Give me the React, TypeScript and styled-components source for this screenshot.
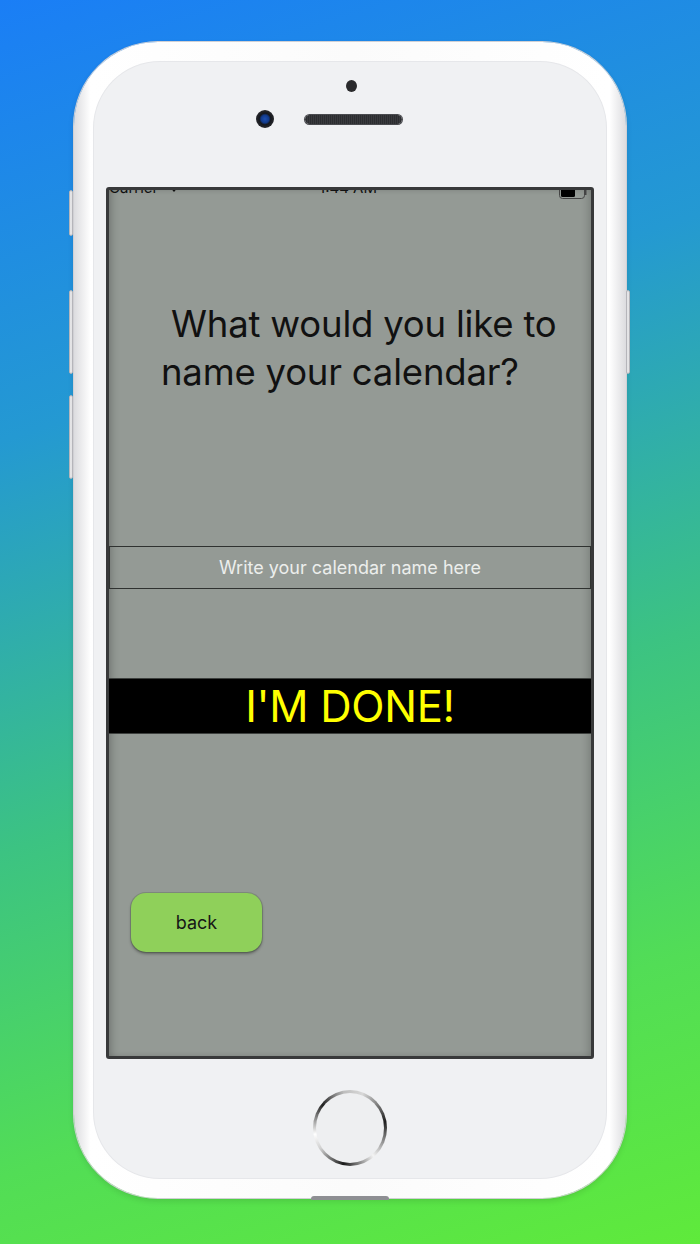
import { FC } from "react";
import styled, { createGlobalStyle } from "styled-components";

const GlobalStyle = createGlobalStyle`
	html, body {
		margin: 0;
		padding: 0;
	}
	body {
		font-family: Inter, "Noto Sans", sans-serif;
	}
`;

const Page = styled.div`
	width: 700px;
	height: 1244px;
	overflow: hidden;
	background: linear-gradient(162deg, #1a7ef6 0%, #2499d2 30%, #3cc382 58%, #52dd56 80%, #5fea3b 100%);
	display: flex;
	justify-content: center;
	padding-top: 42px;
	box-sizing: border-box;
`;

const Phone = styled.div`
	position: relative;
	width: 552px;
	height: 1156px;
	box-sizing: border-box;
	padding: 20px;
	border-radius: 84px;
	background: linear-gradient(90deg, #dcdcdf 0%, #ffffff 3%, #fbfbfb 50%, #ffffff 97%, #dcdcdf 100%);
	box-shadow: 0 0 0 1px #d0d0d4, 0 3px 6px rgba(0, 0, 0, 0.12);
`;

const SideButton = styled.div<{ $side: "left" | "right"; $top: number; $height: number }>`
	position: absolute;
	${props => (props.$side === "left" ? "left: -5px;" : "right: -4px;")}
	top: ${props => props.$top}px;
	width: 4px;
	height: ${props => props.$height}px;
	border-radius: 2px;
	background: linear-gradient(90deg, #c8c8cc, #ffffff 50%, #c8c8cc);
	border: 1px solid #b5b5ba;
	box-sizing: border-box;
`;

const Face = styled.div`
	height: 100%;
	border-radius: 66px;
	background: #f0f1f3;
	box-shadow: 0 0 0 1px #e6e7ea;
	display: flex;
	flex-direction: column;
	align-items: center;
`;

const TopBezel = styled.div`
	width: 100%;
	height: 125px;
	display: flex;
	flex-direction: column;
	align-items: center;
`;

const Sensor = styled.div`
	width: 11px;
	height: 12px;
	border-radius: 50%;
	background: #2a2a2c;
	margin-top: 18px;
	margin-left: 2px;
`;

const EarRow = styled.div`
	display: flex;
	align-items: center;
	margin-top: 18px;
	margin-left: -42px;
	gap: 31px;
`;

const Camera = styled.div`
	width: 18px;
	height: 18px;
	border-radius: 50%;
	background: radial-gradient(circle at 50% 50%, #1d4fb0 0%, #123a8a 30%, #15171c 45%, #2b2c30 75%, #6a6b70 100%);
`;

const Speaker = styled.div`
	width: 97px;
	height: 9px;
	border-radius: 5px;
	background: repeating-linear-gradient(90deg, #3a3b3e 0 1px, #2c2d30 1px 2px);
	box-shadow: 0 0 0 1px #4a4b4f;
`;

const Screen = styled.div`
	width: 488px;
	height: 872px;
	box-sizing: border-box;
	border: 3px solid #38393a;
	border-radius: 3px;
	background: #949a95;
	box-shadow: inset 6px 0 8px -4px rgba(0, 0, 0, 0.25), inset -6px 0 8px -4px rgba(0, 0, 0, 0.2);
	overflow: hidden;
	display: flex;
	flex-direction: column;
`;

const StatusBar = styled.div`
	height: 16px;
	margin-top: -10px;
	padding: 0 4px 0 0;
	display: flex;
	align-items: center;
	justify-content: space-between;
	font-size: 15px;
	line-height: 16px;
	color: #111;
`;

const StatusLeft = styled.div`
	display: flex;
	align-items: center;
	gap: 10px;
	width: 110px;
`;

const StatusRight = styled.div`
	width: 110px;
	display: flex;
	justify-content: flex-end;
	padding-top: 8px;
`;

const Title = styled.h1`
	margin: 104px 0 0 0;
	padding-left: 52px;
	font-size: 36.5px;
	font-weight: 400;
	line-height: 48px;
	color: #111;
	white-space: pre;
	letter-spacing: -0.2px;
`;

const NameInput = styled.input`
	margin-top: 150px;
	height: 43px;
	width: 482px;
	box-sizing: border-box;
	border: 1px solid #2f3230;
	background: transparent;
	text-align: center;
	font-family: Inter, "Noto Sans", sans-serif;
	font-size: 18px;
	color: #fff;
	outline: none;

	&::placeholder {
		color: #eceeec;
	}
`;

const DoneButton = styled.button`
	margin-top: 89px;
	height: 56px;
	width: 100%;
	border: none;
	border-top: 1px solid #3d403e;
	border-bottom: 1px solid #3d403e;
	background: #000;
	color: #ffff00;
	font-family: Inter, "Noto Sans", sans-serif;
	font-size: 43.5px;
	line-height: 54px;
	padding: 0;
	letter-spacing: -0.3px;
`;

const BackButton = styled.button`
	margin: 159px 0 0 22px;
	width: 131px;
	height: 59px;
	border: none;
	border-radius: 15px;
	background: #8fd05a;
	box-shadow: 0 2px 3px rgba(0, 0, 0, 0.35), 0 0 0 1px rgba(90, 110, 80, 0.35);
	font-family: Inter, "Noto Sans", sans-serif;
	font-size: 18px;
	color: #161616;
	padding: 0;
`;

const BottomBezel = styled.div`
	flex: 1;
	display: flex;
	align-items: center;
	justify-content: center;
	padding-top: 18px;
`;

const HomeRing = styled.div`
	width: 74px;
	height: 76px;
	border-radius: 50%;
	padding: 3px;
	box-sizing: border-box;
	background: conic-gradient(from 20deg, #d8d8d8, #1e1e1e 60deg, #f4f4f4 120deg, #1a1a1a 170deg, #cfcfcf 215deg, #ffffff 240deg, #202020 290deg, #bdbdbd 330deg, #d8d8d8);
`;

const HomeInner = styled.div`
	width: 100%;
	height: 100%;
	border-radius: 50%;
	background: #eeeff1;
`;

const Port = styled.div`
	position: absolute;
	bottom: -2px;
	left: 50%;
	transform: translateX(-50%);
	width: 78px;
	height: 4px;
	border-radius: 3px 3px 0 0;
	background: #8e8f93;
`;

const Wifi = () => (
	<svg width="12" height="10" viewBox="0 0 12 10">
		<path d="M6 9 L3.6 6.2 A3.6 3.6 0 0 1 8.4 6.2 Z" fill="#111" />
		<path d="M1.6 4 A6.4 6.4 0 0 1 10.4 4" stroke="#111" strokeWidth="1.4" fill="none" />
	</svg>
);

const Battery = () => (
	<svg width="28" height="13" viewBox="0 0 28 13">
		<rect x="0.5" y="0.5" width="25" height="12" rx="3" fill="none" stroke="#444" strokeWidth="1" />
		<rect x="2" y="2" width="14" height="9" rx="1.5" fill="#000" />
		<rect x="26" y="4" width="1.5" height="5" fill="#444" />
	</svg>
);

const App: FC = () => (
	<Page>
		<GlobalStyle />
		<Phone>
			<SideButton $side="left" $top={148} $height={46} />
			<SideButton $side="left" $top={248} $height={84} />
			<SideButton $side="left" $top={353} $height={84} />
			<SideButton $side="right" $top={248} $height={84} />
			<Face>
				<TopBezel>
					<Sensor />
					<EarRow>
						<Camera />
						<Speaker />
					</EarRow>
				</TopBezel>
				<Screen>
					<StatusBar>
						<StatusLeft>
							<span>Carrier</span>
							<Wifi />
						</StatusLeft>
						<span>1:44 AM</span>
						<StatusRight>
							<Battery />
						</StatusRight>
					</StatusBar>
					<Title>{" What would you like to\nname your calendar?"}</Title>
					<NameInput placeholder="Write your calendar name here" />
					<DoneButton>I'M DONE!</DoneButton>
					<BackButton>back</BackButton>
				</Screen>
				<BottomBezel>
					<HomeRing>
						<HomeInner />
					</HomeRing>
				</BottomBezel>
			</Face>
			<Port />
		</Phone>
	</Page>
);

export default App;
